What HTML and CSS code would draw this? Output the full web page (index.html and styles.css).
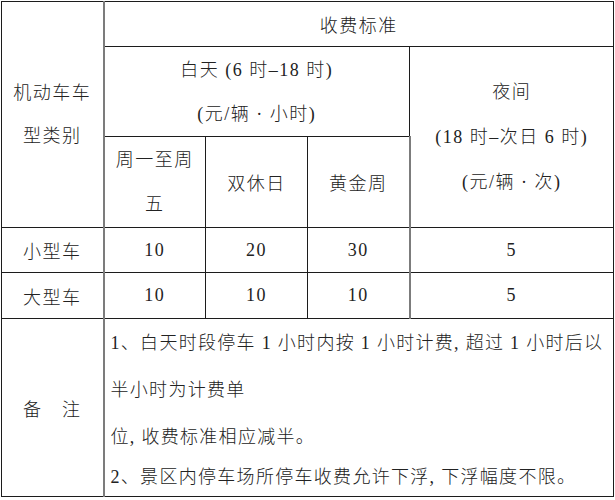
FILE: index.html
```html
<!DOCTYPE html>
<html lang="zh-CN">
<head>
<meta charset="utf-8">
<title>收费标准</title>
<link rel="stylesheet" href="styles.css">
</head>
<body>
<table class="fee">
  <colgroup>
    <col class="c1"><col class="c2"><col class="c3"><col class="c4"><col class="c5">
  </colgroup>
  <tr class="r1">
    <td rowspan="3" class="type sep">机动车车<br>型类别</td>
    <td colspan="4">收费标准</td>
  </tr>
  <tr class="r2">
    <td colspan="3" class="day">白天 (6 时–18 时)<br>(元/辆 · 小时)</td>
    <td rowspan="2" class="night">夜间<br>(18 时–次日 6 时)<br>(元/辆 · 次)</td>
  </tr>
  <tr class="r3">
    <td class="wk">周一至周<br>五</td>
    <td>双休日</td>
    <td class="sep">黄金周</td>
  </tr>
  <tr class="r4">
    <td class="sep">小型车</td>
    <td class="num">10</td>
    <td class="num">20</td>
    <td class="num sep">30</td>
    <td class="num">5</td>
  </tr>
  <tr class="r5">
    <td class="sep">大型车</td>
    <td class="num">10</td>
    <td class="num">10</td>
    <td class="num sep">10</td>
    <td class="num">5</td>
  </tr>
  <tr class="r6">
    <td class="sep remark">备　注</td>
    <td colspan="4" class="notes">
      <p class="n1">1、白天时段停车 1 小时内按 1 小时计费, 超过 1 小时后以<br>半小时为计费单<br>位, 收费标准相应减半。</p>
      <p class="n2">2、景区内停车场所停车收费允许下浮, 下浮幅度不限。</p>
    </td>
  </tr>
</table>
</body>
</html>
```
FILE: styles.css
```css
html, body {
  margin: 0;
  padding: 0;
  background: #ffffff;
}

body {
  padding: 1px 0 0 1px;
  font-family: "Liberation Serif", "Noto Sans CJK SC", serif;
  font-size: 18px;
  color: #222222;
}

.fee {
  border-collapse: collapse;
  table-layout: fixed;
  width: 612px;
}

.c1, .c2, .c3, .c4 { width: 102px; }
.c5 { width: 204px; }

.fee td {
  border: 1px solid #1c1c1c;
  padding: 0;
  text-align: center;
  vertical-align: middle;
  letter-spacing: 1.5px;
  font-weight: 300;
}

.fee td.sep {
  border-right: 2px solid #7c7c7c;
}

.r1 { height: 45px; }
.r2 { height: 90px; }
.r3 { height: 91px; }
.r4 { height: 45px; }
.r5 { height: 46px; }
.r6 { height: 178px; }

.type { line-height: 43px; }
.day { line-height: 44px; }
.night { line-height: 45px; }
.wk { line-height: 44px; }

.remark { letter-spacing: 4px; }

.fee td.notes {
  text-align: left;
  vertical-align: top;
  padding: 0 0 0 6px;
  white-space: nowrap;
  letter-spacing: 1.3px;
}

.notes p { margin: 0; }

.n1 { line-height: 47px; padding-top: 1px; }
.n2 { line-height: 30px; padding-top: 1px; }
```
